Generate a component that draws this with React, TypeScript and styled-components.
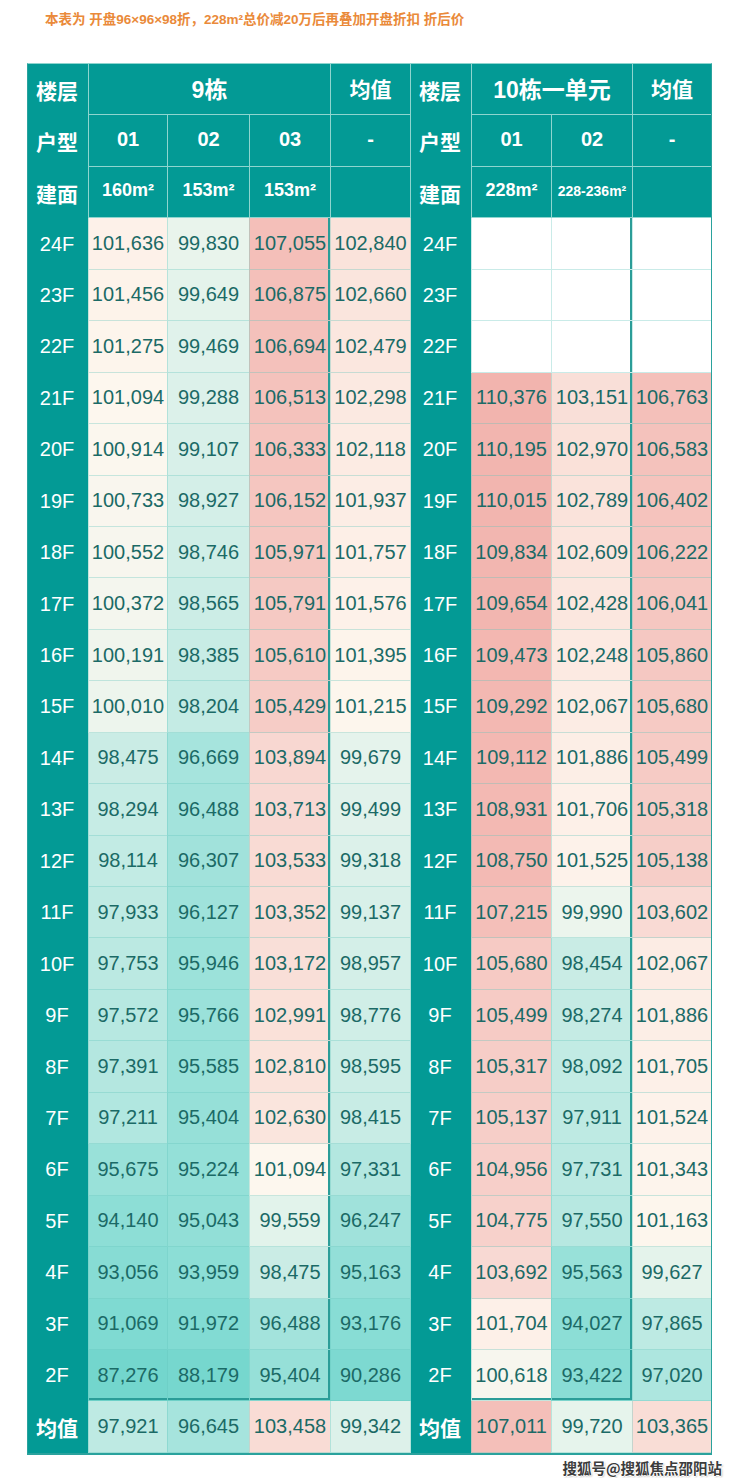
import React from "react";
import styled, { createGlobalStyle } from "styled-components";

const TEAL = "#039a95";
const HEAD_LINE = "#8fd5cf";
const CELL_LINE = "rgba(96, 196, 188, 0.34)";
const FRAME = "#2aa29d";
const BOX = "#2b9d98";

const GlobalStyle = createGlobalStyle`
  html, body { margin: 0; padding: 0; background: #ffffff; }
  body { font-family: "Liberation Sans", Arial, "Noto Sans CJK SC", sans-serif; }
`;

const Page = styled.div`
  width: 740px;
  box-sizing: border-box;
  padding: 10px 0 0 27px;
`;

const Note = styled.p`
  margin: 0 0 0 18px;
  font-family: "Liberation Sans", "Noto Sans CJK SC", sans-serif;
  font-size: 13.5px;
  line-height: 20px;
  font-weight: 700;
  color: #ea8a3a;
`;

const Sheet = styled.div`
  margin-top: 33px;
  display: grid;
  grid-template-columns: 60px 79px 82px 81px 81px 60px 80px 81px 79px;
  grid-template-rows: repeat(27, 51.44px);
  width: 683px;
  background: ${TEAL};
  border: 1px solid ${FRAME};
  border-top-color: ${HEAD_LINE};
  border-bottom-width: 2px;
`;

const FloorCell = styled.div<{ $cjk?: boolean }>`
  display: flex;
  align-items: center;
  justify-content: center;
  color: #ffffff;
  font-family: "Liberation Sans", "Noto Sans CJK SC", sans-serif;
  font-size: ${(p) => (p.$cjk ? "21px" : "20px")};
  font-weight: ${(p) => (p.$cjk ? 700 : 400)};
  padding-right: 2px;
`;

const HeadCell = styled.div<{ $span?: number; $size?: number; $closeRight?: boolean }>`
  grid-column: span ${(p) => p.$span ?? 1};
  display: flex;
  align-items: center;
  justify-content: center;
  padding-bottom: 3px;
  color: #ffffff;
  font-family: "Liberation Sans", "Noto Sans CJK SC", sans-serif;
  font-size: ${(p) => p.$size ?? 20}px;
  font-weight: 700;
  border-left: 1px solid ${HEAD_LINE};
  border-bottom: 1px solid ${HEAD_LINE};
  border-right: ${(p) => (p.$closeRight ? `1px solid ${HEAD_LINE}` : "none")};
  white-space: nowrap;
`;

const DataCell = styled.div<{ $boxRight?: boolean; $boxBottom?: boolean; $closeRight?: boolean }>`
  display: flex;
  align-items: center;
  justify-content: center;
  background: #ffffff;
  color: #1b6a66;
  font-family: "Liberation Sans", Arial, sans-serif;
  font-size: 20px;
  font-weight: 400;
  border-left: 1px solid ${CELL_LINE};
  border-bottom: 1px solid ${CELL_LINE};
  border-right: ${(p) => (p.$closeRight ? `1px solid ${CELL_LINE}` : "none")};
  box-shadow: ${(p) =>
    [p.$boxRight ? `inset -2px 0 0 ${BOX}` : "", p.$boxBottom ? `inset 0 -2px 0 ${BOX}` : ""]
      .filter(Boolean)
      .join(", ") || "none"};
  white-space: nowrap;
`;

const Credit = styled.div`
  margin: 3px 18px 0 0;
  text-align: right;
  font-family: "Noto Sans CJK SC", sans-serif;
  font-size: 14.5px;
  line-height: 20px;
  font-weight: 700;
  color: #3c3c3c;
  text-shadow: 1px 0 0 #fff, -1px 0 0 #fff, 0 1px 0 #fff, 0 -1px 0 #fff, 1px 1px 2px rgba(0, 0, 0, 0.35);
`;

type Row = { floor: string; left: number[] | null; right: number[] | null };

const rows: Row[] = [
  { floor: "24F", left: [101636, 99830, 107055, 102840], right: null },
  { floor: "23F", left: [101456, 99649, 106875, 102660], right: null },
  { floor: "22F", left: [101275, 99469, 106694, 102479], right: null },
  { floor: "21F", left: [101094, 99288, 106513, 102298], right: [110376, 103151, 106763] },
  { floor: "20F", left: [100914, 99107, 106333, 102118], right: [110195, 102970, 106583] },
  { floor: "19F", left: [100733, 98927, 106152, 101937], right: [110015, 102789, 106402] },
  { floor: "18F", left: [100552, 98746, 105971, 101757], right: [109834, 102609, 106222] },
  { floor: "17F", left: [100372, 98565, 105791, 101576], right: [109654, 102428, 106041] },
  { floor: "16F", left: [100191, 98385, 105610, 101395], right: [109473, 102248, 105860] },
  { floor: "15F", left: [100010, 98204, 105429, 101215], right: [109292, 102067, 105680] },
  { floor: "14F", left: [98475, 96669, 103894, 99679], right: [109112, 101886, 105499] },
  { floor: "13F", left: [98294, 96488, 103713, 99499], right: [108931, 101706, 105318] },
  { floor: "12F", left: [98114, 96307, 103533, 99318], right: [108750, 101525, 105138] },
  { floor: "11F", left: [97933, 96127, 103352, 99137], right: [107215, 99990, 103602] },
  { floor: "10F", left: [97753, 95946, 103172, 98957], right: [105680, 98454, 102067] },
  { floor: "9F", left: [97572, 95766, 102991, 98776], right: [105499, 98274, 101886] },
  { floor: "8F", left: [97391, 95585, 102810, 98595], right: [105317, 98092, 101705] },
  { floor: "7F", left: [97211, 95404, 102630, 98415], right: [105137, 97911, 101524] },
  { floor: "6F", left: [95675, 95224, 101094, 97331], right: [104956, 97731, 101343] },
  { floor: "5F", left: [94140, 95043, 99559, 96247], right: [104775, 97550, 101163] },
  { floor: "4F", left: [93056, 93959, 98475, 95163], right: [103692, 95563, 99627] },
  { floor: "3F", left: [91069, 91972, 96488, 93176], right: [101704, 94027, 97865] },
  { floor: "2F", left: [87276, 88179, 95404, 90286], right: [100618, 93422, 97020] },
];

const averages: Row = { floor: "均值", left: [97921, 96645, 103458, 99342], right: [107011, 99720, 103365] };

const anchors: [number, string][] = [
  [87000, "#72d6cd"],
  [92000, "#82dbd3"],
  [95000, "#91dfd7"],
  [96500, "#a3e3dc"],
  [97500, "#b6e8e1"],
  [98400, "#c8ece5"],
  [99300, "#dcf1ea"],
  [99800, "#e8f4ec"],
  [100400, "#f5f6ee"],
  [101100, "#fdf7ee"],
  [101700, "#fdf0e8"],
  [102800, "#fae3db"],
  [103900, "#f8d7d1"],
  [105400, "#f6ccc6"],
  [106800, "#f4c0ba"],
  [110400, "#f2b4ae"],
];

const hex = (h: string) => [1, 3, 5].map((i) => parseInt(h.slice(i, i + 2), 16));

function tone(v: number): string {
  if (v <= anchors[0][0]) return anchors[0][1];
  for (let i = 1; i < anchors.length; i++) {
    const [v1, c1] = anchors[i];
    if (v <= v1) {
      const [v0, c0] = anchors[i - 1];
      const t = (v - v0) / (v1 - v0);
      const a = hex(c0);
      const b = hex(c1);
      const m = a.map((x, k) => Math.round(x + (b[k] - x) * t));
      return `rgb(${m[0]}, ${m[1]}, ${m[2]})`;
    }
  }
  return anchors[anchors.length - 1][1];
}

const fmt = (v: number) => v.toLocaleString("en-US");

function SideCells({
  values,
  count,
  framed,
  lastFloor,
  closeRight,
}: {
  values: number[] | null;
  count: number;
  framed: boolean;
  lastFloor: boolean;
  closeRight: boolean;
}) {
  return (
    <>
      {Array.from({ length: count }).map((_, i) => {
        const v = values ? values[i] : null;
        const isAvgCol = i === count - 1;
        return (
          <DataCell
            key={i}
            $boxRight={framed && i === count - 2}
            $boxBottom={framed && lastFloor && !isAvgCol}
            $closeRight={closeRight && isAvgCol}
            style={v !== null ? { background: tone(v) } : undefined}
          >
            {v !== null ? fmt(v) : ""}
          </DataCell>
        );
      })}
    </>
  );
}

function TableRow({ row, framed, lastFloor }: { row: Row; framed: boolean; lastFloor: boolean }) {
  const cjk = !/F$/.test(row.floor);
  return (
    <>
      <FloorCell $cjk={cjk}>{row.floor}</FloorCell>
      <SideCells values={row.left} count={4} framed={framed} lastFloor={lastFloor} closeRight />
      <FloorCell $cjk={cjk}>{row.floor}</FloorCell>
      <SideCells values={row.right} count={3} framed={framed} lastFloor={lastFloor} closeRight={false} />
    </>
  );
}

export default function App() {
  return (
    <>
      <GlobalStyle />
      <Page>
        <Note>本表为 开盘96×96×98折，228m²总价减20万后再叠加开盘折扣 折后价</Note>
        <Sheet>
          <FloorCell $cjk>楼层</FloorCell>
          <HeadCell $span={3} $size={23}>9栋</HeadCell>
          <HeadCell $size={21} $closeRight>均值</HeadCell>
          <FloorCell $cjk>楼层</FloorCell>
          <HeadCell $span={2} $size={23}>10栋一单元</HeadCell>
          <HeadCell $size={21}>均值</HeadCell>

          <FloorCell $cjk>户型</FloorCell>
          <HeadCell>01</HeadCell>
          <HeadCell>02</HeadCell>
          <HeadCell>03</HeadCell>
          <HeadCell $closeRight>-</HeadCell>
          <FloorCell $cjk>户型</FloorCell>
          <HeadCell>01</HeadCell>
          <HeadCell>02</HeadCell>
          <HeadCell>-</HeadCell>

          <FloorCell $cjk>建面</FloorCell>
          <HeadCell $size={18}>160m²</HeadCell>
          <HeadCell $size={18}>153m²</HeadCell>
          <HeadCell $size={18}>153m²</HeadCell>
          <HeadCell $closeRight />
          <FloorCell $cjk>建面</FloorCell>
          <HeadCell $size={18}>228m²</HeadCell>
          <HeadCell $size={14}>228-236m²</HeadCell>
          <HeadCell />

          {rows.map((row, idx) => (
            <TableRow key={row.floor} row={row} framed lastFloor={idx === rows.length - 1} />
          ))}
          <TableRow row={averages} framed={false} lastFloor={false} />
        </Sheet>
        <Credit>搜狐号@搜狐焦点邵阳站</Credit>
      </Page>
    </>
  );
}
